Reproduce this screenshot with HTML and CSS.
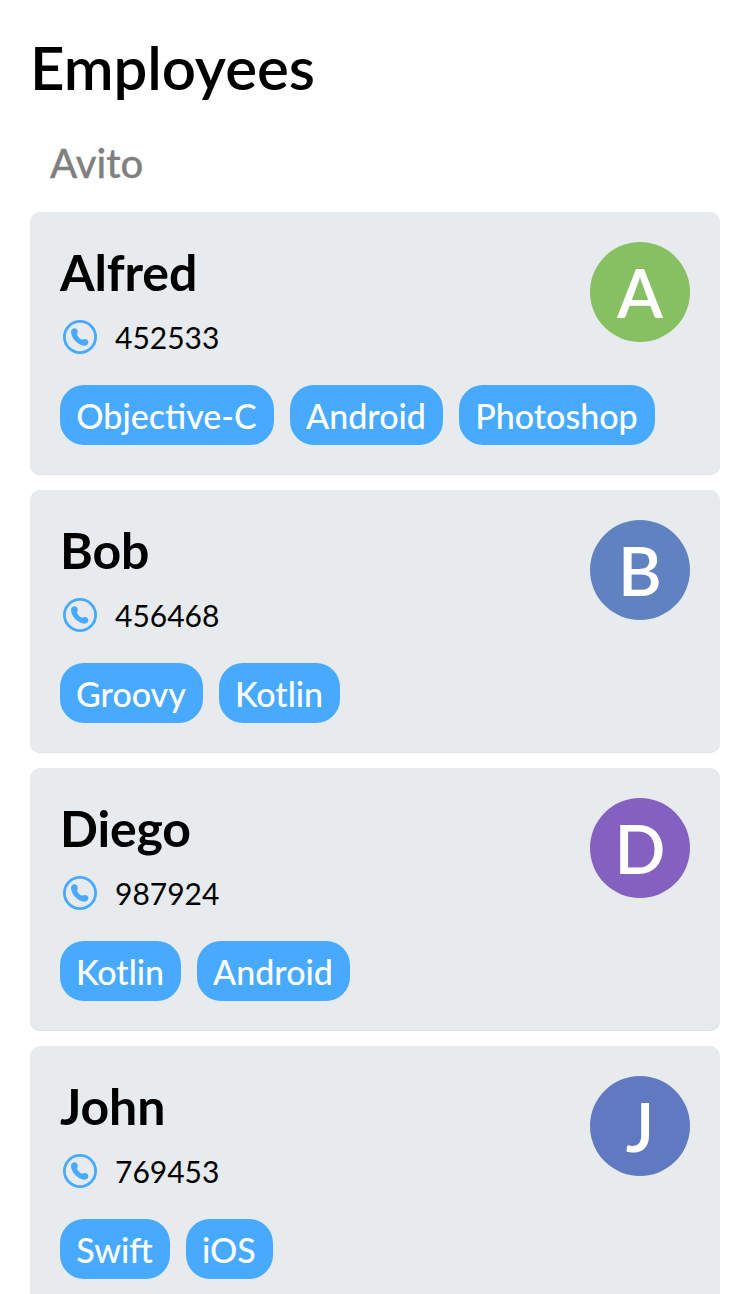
FILE: index.html
```html
<!DOCTYPE html>
<html lang="en">
<head>
<meta charset="utf-8">
<title>Employees</title>
<link rel="stylesheet" href="styles.css">
</head>
<body>
<svg class="defs" width="0" height="0" aria-hidden="true">
  <symbol id="phone" viewBox="0 0 34 34">
    <circle cx="17" cy="17" r="15.6" fill="none" stroke="#48aaff" stroke-width="2.8"/>
    <path fill="#48aaff" d="M8 11.500C8 9.700 9.800 8.300 11.500 8.300C13.500 8.300 15 10.200 14.800 12.200C14.700 13.400 13.900 13.900 14.200 14.900C14.800 16.600 17 18.900 18.800 19.600C19.900 20 20.500 19.200 21.700 19.100C23.700 18.900 25.400 20.400 25.400 22.300C25.400 24.200 23.800 25.600 21.500 25.700C18.500 25.900 14.900 23.700 12.300 21.100C9.700 18.400 8 14.600 8 11.500Z"/>
  </symbol>
</svg>
<main class="screen">
  <h1 class="title">Employees</h1>
  <h2 class="company">Avito</h2>
  <div class="list">
    <article class="card">
      <div class="info"><h3 class="name">Alfred</h3><div class="phone"><svg class="icon"><use href="#phone"/></svg><span>452533</span></div></div>
      <div class="avatar green">A</div>
      <div class="skills"><span class="skill w214">Objective-C</span><span class="skill w153">Android</span><span class="skill w196">Photoshop</span></div>
    </article>
    <article class="card">
      <div class="info"><h3 class="name">Bob</h3><div class="phone"><svg class="icon"><use href="#phone"/></svg><span>456468</span></div></div>
      <div class="avatar blue">B</div>
      <div class="skills"><span class="skill w143">Groovy</span><span class="skill w121">Kotlin</span></div>
    </article>
    <article class="card">
      <div class="info"><h3 class="name">Diego</h3><div class="phone"><svg class="icon"><use href="#phone"/></svg><span>987924</span></div></div>
      <div class="avatar purple">D</div>
      <div class="skills"><span class="skill w121">Kotlin</span><span class="skill w153">Android</span></div>
    </article>
    <article class="card">
      <div class="info"><h3 class="name">John</h3><div class="phone"><svg class="icon"><use href="#phone"/></svg><span>769453</span></div></div>
      <div class="avatar indigo">J</div>
      <div class="skills"><span class="skill w110">Swift</span><span class="skill w87">iOS</span></div>
    </article>
  </div>
</main>
</body>
</html>
```
FILE: styles.css
```css
* { box-sizing: border-box; }
html, body { margin: 0; height: 100%; overflow: hidden; }
body { background: #fff; color: #000; font-family: Lato, sans-serif; }
.defs { display: block; }
.screen { height: 1294px; padding: 31px 30px 0; overflow: hidden; }
.title { margin: 0; font-size: 60px; font-weight: 600; line-height: 72px; letter-spacing: -0.1px; }
.company { margin: 36px 0 0 20px; height: 73px; color: #808080; font-size: 40px; font-weight: 500; line-height: 48px; -webkit-text-stroke: 0.3px #808080; }
.list { display: flex; flex-direction: column; gap: 15px; }
.card { display: grid; grid-template-columns: 1fr 100px; grid-template-rows: 143px 60px; flex: none; height: 263px; padding: 30px; border-radius: 10px; background: #e7ebee; box-shadow: inset 0 -1px #e0e2e5; }
.name { margin: 0; font-size: 50px; font-weight: 700; line-height: 61px; letter-spacing: -0.15px; }
.phone { display: flex; align-items: center; gap: 18px; height: 36px; margin: 16px 0 0 3px; font-size: 30px; line-height: 36px; }
.icon { width: 34px; height: 34px; }
.avatar { height: 100px; border-radius: 50%; color: #fff; font-size: 67px; font-weight: 600; line-height: 101px; text-align: center; }
.green { background: #86c062; }
.blue { background: #6082c0; }
.purple { background: #8460c0; }
.indigo { background: #6079c0; }
.skills { display: flex; grid-column: 1 / -1; gap: 16px; }
.skill { height: 60px; padding-right: 1px; border-radius: 24px; background: #48aaff; color: #fff; font-size: 34px; font-weight: 500; line-height: 62px; text-align: center; white-space: nowrap; }
.w214 { width: 214px; }
.w196 { width: 196px; }
.w153 { width: 153px; }
.w143 { width: 143px; }
.w121 { width: 121px; }
.w110 { width: 110px; }
.w87 { width: 87px; }
```
